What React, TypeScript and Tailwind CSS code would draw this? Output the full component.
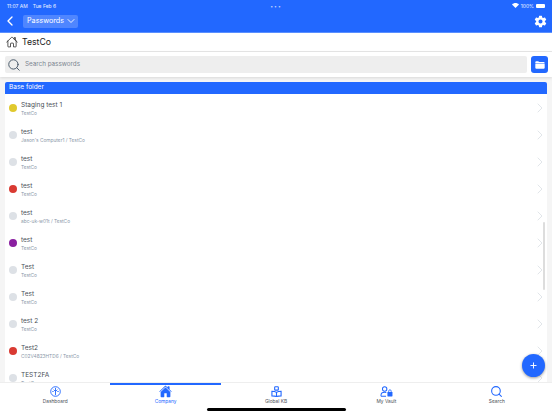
import { ChevronLeft, ChevronDown, ChevronRight, Search, Plus } from "lucide-react";
import { IoHomeOutline, IoHome, IoSettingsSharp, IoFolder } from "react-icons/io5";

const rows: [string, string, string][] = [
  ["Staging test 1", "TestCo", "bg-[#e0c92e]"],
  ["test", "Jason's Computer1 / TestCo", "bg-[#dde1e6]"],
  ["test", "TestCo", "bg-[#dde1e6]"],
  ["test", "TestCo", "bg-[#d93a32]"],
  ["test", "abc-uk-w01t / TestCo", "bg-[#dde1e6]"],
  ["test", "TestCo", "bg-[#8a1fa0]"],
  ["Test", "TestCo", "bg-[#dde1e6]"],
  ["Test", "TestCo", "bg-[#dde1e6]"],
  ["test 2", "TestCo", "bg-[#dde1e6]"],
  ["Test2", "C02V4823HTD6 / TestCo", "bg-[#d93a32]"],
  ["TEST2FA", "TestCo", "bg-[#dde1e6]"],
];

function Dash() {
  return (
    <svg width="11" height="11" viewBox="0 0 24 24" fill="none" stroke="#2268ff" strokeWidth="2">
      <circle cx="12" cy="12" r="10.5" />
      <path d="M12 4v16M5 12h3M16 12h3M8 8l4 4 4-4" />
    </svg>
  );
}
function Kb() {
  return (
    <svg width="11" height="11" viewBox="0 0 24 24" fill="none" stroke="#2268ff" strokeWidth="2.4">
      <rect x="8" y="1.5" width="8" height="7.5" rx="1.5" />
      <path d="M2 11.5c3.5 0 7 .5 10 2.5 3-2 6.5-2.5 10-2.5v10c-3.5 0-7 .3-10 1.5-3-1.2-6.5-1.5-10-1.5zM12 14v9" />
    </svg>
  );
}
function Vault() {
  return (
    <svg width="13" height="11" viewBox="0 0 28 24" fill="none" stroke="#2268ff" strokeWidth="2.2">
      <circle cx="10" cy="6.5" r="4.8" />
      <path d="M2 22.5v-2.5c0-4 3-6.5 8-6.5 1.5 0 2.5.2 3.5.6M2 22.5h11" />
      <rect x="16" y="13" width="11" height="10" rx="1" fill="#2268ff" stroke="none" />
      <path d="M18.8 13.5v-2.5a2.7 2.7 0 0 1 5.4 0v2.5" strokeWidth="1.8" />
    </svg>
  );
}

function Tab({ label, icon, active }: { label: string; icon: React.ReactNode; active?: boolean }) {
  return (
    <div className={`flex flex-1 flex-col items-center border-t-2 ${active ? "border-[#2268ff]" : "border-transparent"}`}>
      <div className="flex h-[13px] items-center justify-center">{icon}</div>
      <span className={`text-[4.8px] leading-[7px] ${active ? "text-[#2268ff]" : "text-[#4a4f57]"}`}>{label}</span>
    </div>
  );
}

export default function App() {
  return (
    <div className="relative flex h-[414px] w-[552px] flex-col overflow-hidden bg-[#f5f5f5] font-['Inter',sans-serif]">
      <header className="h-[33px] shrink-0 border-b border-[#5a8fff] bg-[#2268ff] text-white">
        <div className="flex h-[10px] items-center justify-between pl-[7px] pr-[7px] pt-[1px] text-[5px] leading-[8px] text-white/90">
          <span className="w-[60px]">
            11:07 AM<span className="ml-[5px]">Tue Feb 6</span>
          </span>
          <span className="tracking-[1px] text-white/70">•••</span>
          <span className="flex w-[60px] items-center justify-end gap-[2px]">
            <svg width="7" height="5" viewBox="0 0 14 10" fill="white">
              <path d="M7 10L0 3c4-4 10-4 14 0z" />
            </svg>
            100%
            <span className="h-[4px] w-[9px] rounded-[1px] bg-white" />
          </span>
        </div>
        <div className="flex h-[22px] items-center justify-between pl-[2px] pr-[5px]">
          <div className="flex items-center">
            <ChevronLeft size={16} strokeWidth={2} color="white" />
            <div className="ml-[5px] flex h-[13px] w-[55px] items-center rounded-[2px] bg-[#4f86ff] pl-[4px] text-[7.2px]">
              Passwords
              <ChevronDown size={12} strokeWidth={1.8} className="ml-[1px]" />
            </div>
          </div>
          <IoSettingsSharp size={13} color="white" />
        </div>
      </header>

      <div className="flex h-[19px] shrink-0 items-center gap-[4px] border-b border-[#e8e8e8] bg-white pl-[6px]">
        <IoHomeOutline size={12} color="#222" />
        <span className="pt-[1px] text-[8.7px] leading-none text-[#222]">TestCo</span>
      </div>

      <div className="flex h-[25px] shrink-0 items-center gap-[4px] bg-white pl-[5px] pr-[4px] shadow-[0_1px_3px_rgba(0,0,0,0.12)]">
        <div className="flex h-[17px] flex-1 items-center gap-[4px] rounded-[2px] bg-[#eeeeee] pl-[2px]">
          <Search size={14} strokeWidth={1.7} color="#4a5a6a" />
          <span className="text-[6.3px] text-[#7b8590]">Search passwords</span>
        </div>
        <div className="flex h-[17px] w-[17px] items-center justify-center rounded-[3px] bg-[#2268ff]">
          <IoFolder size={10} color="white" />
        </div>
      </div>

      <main className="mx-[5px] mt-[5px] flex min-h-0 flex-1 flex-col overflow-hidden">
        <div className="flex h-[12px] shrink-0 items-center rounded-t-[2px] bg-[#2268ff] pl-[4px] text-[6.5px] text-white">
          Base folder
        </div>
        <div className="flex-1 overflow-hidden bg-white">
          {rows.map(([t, s, c], i) => (
            <div key={i} className="flex h-[27px] items-center pl-[4px]">
              <span className={`h-[8px] w-[8px] shrink-0 rounded-full ${c}`} />
              <div className="ml-[4px] flex flex-1 flex-col pt-[2px]">
                <span className="text-[6.5px] leading-[9px] text-[#4a4f57]">{t}</span>
                <span className="text-[4.8px] leading-[7px] text-[#8a97a8]">{s}</span>
              </div>
              <ChevronRight size={16} strokeWidth={1.5} color="#e2e6ea" className="mr-[-1px] shrink-0" />
            </div>
          ))}
        </div>
      </main>

      <nav className="flex h-[32px] shrink-0 border-t border-[#eeeeee] bg-white">
        <Tab label="Dashboard" icon={<Dash />} />
        <Tab label="Company" icon={<IoHome size={13} color="#2268ff" />} active />
        <Tab label="Global KB" icon={<Kb />} />
        <Tab label="My Vault" icon={<Vault />} />
        <Tab label="Search" icon={<Search size={13} strokeWidth={2} color="#2268ff" />} />
      </nav>

      <div className="absolute right-[7px] top-[222px] h-[68px] w-[2px] rounded-full bg-[#dddddd]" />
      <button className="absolute left-[522px] top-[354px] flex h-[23px] w-[23px] items-center justify-center rounded-full bg-[#2268ff] shadow-[0_1px_3px_rgba(0,0,0,0.4)]">
        <Plus size={9} strokeWidth={2.5} color="white" />
      </button>
      <div className="absolute left-[207px] top-[408px] h-[2.5px] w-[139px] rounded-full bg-black" />
    </div>
  );
}
